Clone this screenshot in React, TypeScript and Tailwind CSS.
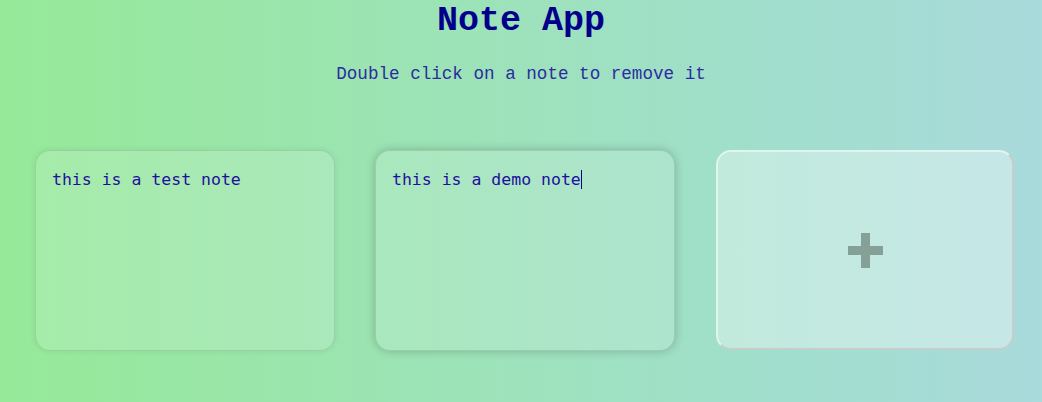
import React from "react";

const notes = [
  { id: 1, text: "this is a test note", focused: false },
  { id: 2, text: "this is a demo note", focused: true },
];

export default function App() {
  return (
    <div className="w-[1042px] h-[402px] overflow-hidden bg-[linear-gradient(to_right,#96e998,#a0dfca_70%,#a9dadc)]">
      <h1 className="pt-[3px] text-center text-[35px] leading-[36px] font-bold text-[#00008b] font-['Liberation_Mono',monospace]">
        Note App
      </h1>
      <p className="mt-[25px] text-center text-[17.6px] leading-[20px] text-[#2c2ca0] font-['Liberation_Mono',monospace]">
        Double click on a note to remove it
      </p>
      <div className="mt-[66px] flex gap-10 pl-[35px]">
        {notes.map((note) => (
          <div
            key={note.id}
            className={
              "w-[300px] h-[201px] rounded-[15px] border bg-white/15 px-4 pt-[19px] text-[16.5px] leading-[20px] text-[#1f0f9c] font-['DejaVu_Sans_Mono',monospace] " +
              (note.focused
                ? "border-black/10 shadow-[0_0_10px_rgba(0,0,0,0.22)]"
                : "border-black/10 shadow-[0_0_6px_rgba(0,0,0,0.08)]")
            }
          >
            {note.text}
            {note.focused && <span className="inline-block w-px h-[19px] align-[-4px] bg-[#00008b]" />}
          </div>
        ))}
        <button className="ml-px w-[298px] h-[200px] rounded-[15px] border-2 border-t-white/50 border-l-white/50 border-b-[#c4cfcc] border-r-[#c4cfcc] bg-white/35 flex items-center justify-center">
          <svg width="35" height="35" viewBox="0 0 35 35">
            <rect x="0" y="13" width="35" height="9" fill="#85a096" />
            <rect x="13" y="0" width="9" height="35" fill="#85a096" />
          </svg>
        </button>
      </div>
    </div>
  );
}
